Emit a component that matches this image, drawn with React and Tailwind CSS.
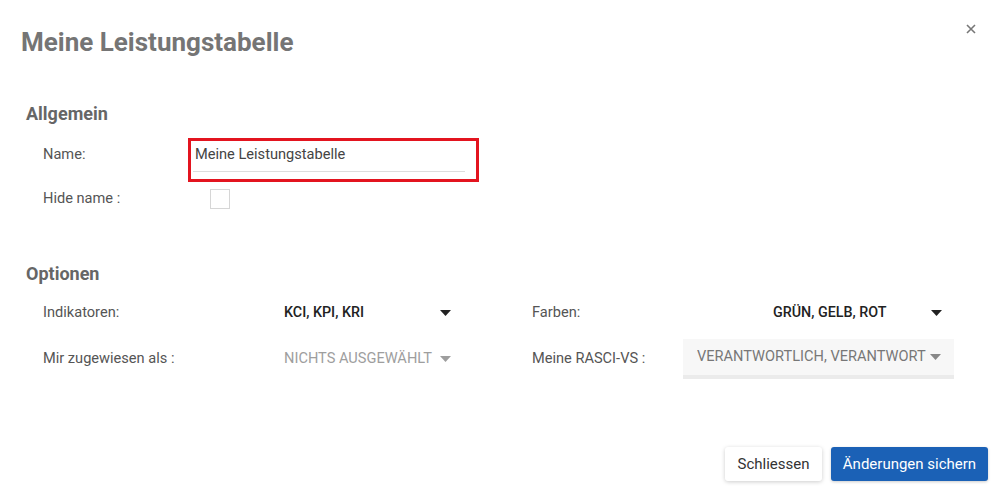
import React from "react";

const Caret = ({ className = "" }) => (
    <svg width="11" height="6" viewBox="0 0 11 6" className={className}>
        <polygon points="0,0 11,0 5.5,6" fill="currentColor" />
    </svg>
);

const SelectRow = ({ label, value, muted }) => (
    <div className="flex items-center h-[40px]">
        <div className="w-[241px] text-[14.6px] text-[#555]">{label}</div>
        <div className="w-[170px] flex items-center justify-between">
            <span className={muted ? "text-[14.6px] text-[#9e9e9e]" : "text-[14.3px] text-[#222] font-medium"}>{value}</span>
            <Caret className={muted ? "text-[#9e9e9e] mr-[3px]" : "text-[#222] mr-[3px]"} />
        </div>
    </div>
);

const App = () => {
    return (
        <div className="w-[1000px] h-[493px] bg-white font-['Roboto',sans-serif] flex flex-col">
            {/* header */}
            <div className="flex justify-between items-start pl-[21px] pr-[24px] pt-[25px]">
                <h1 className="text-[26px] leading-[34px] font-bold text-[#757575]">Meine Leistungstabelle</h1>
                <button className="mt-[-1px] text-[#777]">
                    <svg width="10" height="10" viewBox="0 0 10 10">
                        <path d="M1 1 L9 9 M9 1 L1 9" stroke="currentColor" strokeWidth="1.6" />
                    </svg>
                </button>
            </div>

            {/* Allgemein */}
            <div className="pl-[26px] mt-[43px]">
                <h2 className="text-[18px] leading-[24px] font-bold text-[#666]">Allgemein</h2>
                <div className="pl-[17px] mt-[12px] flex items-start">
                    <div className="w-[145px] mt-[6px] text-[14.6px] leading-[20px] text-[#555]">Name:</div>
                    <div className="w-[291px] h-[44px] border-[3px] border-[#e3141f]">
                        <div className="ml-[2px] mr-[11px] pt-[3px] pl-[2px] pb-[7px] border-b border-[#ddd] text-[14.6px] leading-[20px] text-[#444]">
                            Meine Leistungstabelle
                        </div>
                    </div>
                </div>
                <div className="pl-[17px] mt-[7px] flex items-center h-[20px]">
                    <div className="w-[167px] text-[14.6px] text-[#555]">Hide name :</div>
                    <div className="w-[20px] h-[20px] border border-[#d6d6d6] bg-white"></div>
                </div>
            </div>

            {/* Optionen */}
            <div className="pl-[26px] mt-[53px]">
                <h2 className="text-[18px] leading-[24px] font-bold text-[#666]">Optionen</h2>
                <div className="pl-[17px] mt-[7px] grid grid-cols-[489px_422px] gap-y-[6px]">
                    <SelectRow label="Indikatoren:" value="KCI, KPI, KRI" />
                    <div className="flex items-center h-[40px]">
                        <div className="w-[151px] text-[14.6px] text-[#555]">Farben:</div>
                        <div className="w-[271px] flex items-center pl-[90px] pr-[12px] justify-between">
                            <span className="text-[14.3px] text-[#222] font-medium">GRÜN, GELB, ROT</span>
                            <Caret className="text-[#222]" />
                        </div>
                    </div>
                    <SelectRow label="Mir zugewiesen als :" value="NICHTS AUSGEWÄHLT" muted />
                    <div className="flex items-center h-[40px]">
                        <div className="w-[151px] text-[14.6px] text-[#555]">Meine RASCI-VS :</div>
                        <div className="w-[271px] h-[40px] bg-[#f7f7f7] border-b-[4px] border-[#ebebeb] flex items-center pl-[14px] pr-[13px] justify-between">
                            <span className="w-[229px] overflow-hidden whitespace-nowrap text-[14.6px] text-[#777]">VERANTWORTLICH, VERANTWORTLICH</span>
                            <Caret className="text-[#888]" />
                        </div>
                    </div>
                </div>
            </div>

            {/* footer */}
            <div className="mt-auto mb-[12px] pr-[12px] flex justify-end gap-[9px]">
                <button className="w-[97px] h-[34px] bg-white rounded-[3px] shadow-[0_1px_4px_rgba(0,0,0,0.2)] text-[15px] text-[#333]">Schliessen</button>
                <button className="w-[157px] h-[34px] bg-[#1b61b6] rounded-[3px] shadow-[0_1px_3px_rgba(0,0,0,0.2)] text-[15px] text-white">Änderungen sichern</button>
            </div>
        </div>
    );
};

export default App;
